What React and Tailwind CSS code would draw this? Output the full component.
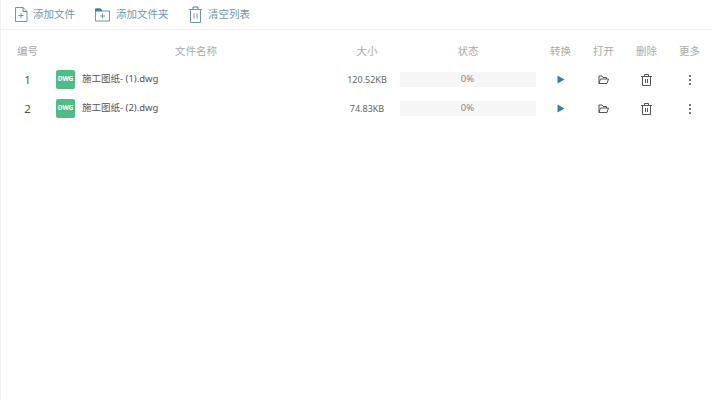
import React from "react";

const cjk = "font-['Noto_Sans','Noto_Sans_CJK_SC',sans-serif]";
const cols = "grid grid-cols-[55px_282px_60px_142px_43px_43px_43px_43px] items-center";

const files = [
  { id: 1, name: "施工图纸- (1).dwg", size: "120.52KB" },
  { id: 2, name: "施工图纸- (2).dwg", size: "74.83KB" },
];

const AddFileIcon = () => (
  <svg width="14" height="17" viewBox="0 0 14 17" fill="none" stroke="#6f98ad" strokeWidth="1">
    <path d="M1.500 1.500h7.500l4 4v10h-11.500z" />
    <path d="M9 1.500v4h4" stroke="#3f8fc0" />
    <path d="M4.500 9.500h5M7 7v5" />
  </svg>
);

const AddFolderIcon = () => (
  <svg width="15" height="14" viewBox="0 0 15 14" fill="none" stroke="#6f98ad" strokeWidth="1">
    <path d="M0.500 1h5l1.500 2h7.500v10h-14z" />
    <path d="M0.500 1h5l1.500 2h-6.500z" fill="#3f7fa8" stroke="#3f7fa8" />
    <path d="M5 8h5M7.500 5.500v5" />
  </svg>
);

const ClearIcon = () => (
  <svg width="13" height="17" viewBox="0 0 13 17" fill="none" stroke="#6f98ad" strokeWidth="1">
    <path d="M1.500 3.500h10v13h-10z" />
    <path d="M0 3.500h13" />
    <path d="M4 3V1h5v2" stroke="#3f7fa8" />
    <path d="M5 7.500v5M8 7.500v5" />
  </svg>
);

const DwgIcon = () => (
  <div className="w-[19px] h-[19px] rounded-[2px] bg-[#4fbb87] flex items-center justify-center text-white text-[6.500px] font-bold leading-none">
    DWG
  </div>
);

const PlayIcon = () => (
  <svg width="8" height="9" viewBox="0 0 8 9">
    <path d="M0.500 0.500L7.500 4.500L0.500 8.500z" fill="#2f7fbe" />
  </svg>
);

const FolderOpenIcon = () => (
  <svg width="11" height="10" viewBox="0 0 11 10" fill="none" stroke="#555" strokeWidth="1">
    <path d="M1 8.500V1h3l1 1.500h3.500V4" />
    <path d="M1 8.500L2.500 4h8L9 8.500z" />
  </svg>
);

const TrashIcon = () => (
  <svg width="11" height="12" viewBox="0 0 11 12" fill="none" stroke="#555" strokeWidth="1">
    <path d="M0 2.500h11M3.500 2.500V0.500h4v2" />
    <path d="M1.500 2.500v9h8v-9" />
    <path d="M4.500 5v4M6.500 5v4" />
  </svg>
);

const MoreIcon = () => (
  <div className="flex flex-col gap-[2px]">
    <span className="w-[2px] h-[2px] bg-[#777]" />
    <span className="w-[2px] h-[2px] bg-[#777]" />
    <span className="w-[2px] h-[2px] bg-[#777]" />
  </div>
);

const ToolButton = ({ icon, label, className, gap }) => (
  <div className={`flex items-center ${gap} ${className}`}>
    {icon}
    <span className="text-[10.500px] text-[#6f98ad]">{label}</span>
  </div>
);

const App = () => {
  return (
    <div className={`w-[712px] h-[400px] bg-white border-l border-[#f0f0f0] overflow-hidden ${cjk}`}>
      <div className="h-[30px] border-b border-[#f0f0f0] flex items-center pl-[13px]">
        <ToolButton icon={<AddFileIcon />} label="添加文件" gap="gap-[5px]" className="w-[81px]" />
        <ToolButton icon={<AddFolderIcon />} label="添加文件夹" gap="gap-[6px]" className="w-[94px]" />
        <ToolButton icon={<ClearIcon />} label="清空列表" gap="gap-[6px]" />
      </div>

      <div className={`${cols} h-[26px] mt-[9px] text-[10.500px] text-[#aaaaaa] text-center -ml-px`}>
        <div>编号</div>
        <div>文件名称</div>
        <div>大小</div>
        <div>状态</div>
        <div>转换</div>
        <div>打开</div>
        <div>删除</div>
        <div>更多</div>
      </div>

      {files.map((file) => (
        <div key={file.id} className={`${cols} h-[29px] text-center -ml-px`}>
          <div className="text-[11.500px] text-[#555]">{file.id}</div>
          <div className="flex items-center gap-[7px] pl-px">
            <DwgIcon />
            <span className="text-[9.500px] text-[#555]">{file.name}</span>
          </div>
          <div className="text-[9px] text-[#666]">{file.size}</div>
          <div className="flex justify-center">
            <div className="w-[136px] h-[15px] bg-[#f6f6f6] flex items-center justify-center text-[9.500px] text-[#888] pr-px">
              0%
            </div>
          </div>
          <div className="flex justify-center"><PlayIcon /></div>
          <div className="flex justify-center"><FolderOpenIcon /></div>
          <div className="flex justify-center"><TrashIcon /></div>
          <div className="flex justify-center"><MoreIcon /></div>
        </div>
      ))}
    </div>
  );
};

export default App;
